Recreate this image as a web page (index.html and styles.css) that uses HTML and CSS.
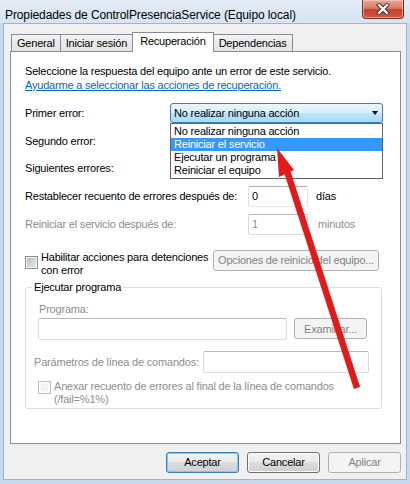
FILE: index.html
```html
<!DOCTYPE html>
<html lang="es">
<head>
    <meta charset="UTF-8">
    <title>Propiedades de ControlPresenciaService (Equipo local)</title>
    <link rel="stylesheet" href="styles.css">
</head>
<body>

<div class="window">
    <!-- barra de título -->
    <div class="titlebar">
        <span class="title">Propiedades de ControlPresenciaService (Equipo local)</span>
        <button class="close-btn" title="Cerrar">
            <svg width="14" height="12" viewBox="0 0 14 12">
                <path d="M3 2 L11 10 M11 2 L3 10" stroke="#3a3a3a" stroke-width="4.2" stroke-linecap="square"/>
                <path d="M3 2 L11 10 M11 2 L3 10" stroke="#fff" stroke-width="2.2" stroke-linecap="square"/>
            </svg>
        </button>
    </div>

    <div class="client">
        <!-- pestañas -->
        <div class="tabs">
            <div class="tab">General</div>
            <div class="tab">Iniciar sesión</div>
            <div class="tab active">Recuperación</div>
            <div class="tab">Dependencias</div>
        </div>

        <div class="panel">
            <p class="intro">Seleccione la respuesta del equipo ante un error de este servicio.</p>
            <a class="help-link" href="#">Ayudarme a seleccionar las acciones de recuperación.</a>

            <div class="field-row first">
                <span class="field-label">Primer error:</span>
                <div class="combo focused">
                    <span>No realizar ninguna acción</span>
                    <span class="combo-arrow"></span>
                    <ul class="dropdown">
                        <li>No realizar ninguna acción</li>
                        <li class="selected">Reiniciar el servicio</li>
                        <li>Ejecutar un programa</li>
                        <li>Reiniciar el equipo</li>
                    </ul>
                </div>
            </div>
            <!-- estos dos quedan tapados por la lista desplegada -->
            <div class="field-row second">
                <span class="field-label">Segundo error:</span>
                <div class="combo"><span class="combo-arrow"></span></div>
            </div>
            <div class="field-row third">
                <span class="field-label">Siguientes errores:</span>
                <div class="combo"><span class="combo-arrow"></span></div>
            </div>

            <div class="field-row reset-row">
                <span class="field-label wide">Restablecer recuento de errores después de:</span>
                <input class="textbox small" type="text" value="0">
                <span class="unit">días</span>
            </div>
            <div class="field-row restart-row disabled">
                <span class="field-label wide">Reiniciar el servicio después de:</span>
                <input class="textbox small" type="text" value="1" disabled>
                <span class="unit minutes">minutos</span>
            </div>

            <div class="check-row">
                <span class="checkbox"></span>
                <span class="check-label">Habilitar acciones para detenciones<br>con error</span>
                <button class="btn options-btn" disabled>Opciones de reinicio del equipo...</button>
            </div>

            <!-- grupo ejecutar programa -->
            <div class="groupbox">
                <span class="legend">Ejecutar programa</span>
                <div class="program-label disabled">Programa:</div>
                <div class="program-row">
                    <input class="textbox program-input" type="text" disabled>
                    <button class="btn browse-btn" disabled>Examinar...</button>
                </div>
                <div class="params-row">
                    <span class="params-label disabled">Parámetros de línea de comandos:</span>
                    <input class="textbox params-input" type="text" disabled>
                </div>
                <div class="append-row disabled">
                    <span class="checkbox off"></span>
                    <span class="check-label">Anexar recuento de errores al final de la línea de comandos<br>(/fail=%1%)</span>
                </div>
            </div>
        </div>

        <!-- botones -->
        <div class="dialog-buttons">
            <button class="btn default">Aceptar</button>
            <button class="btn">Cancelar</button>
            <button class="btn" disabled>Aplicar</button>
        </div>
    </div>

    <!-- flecha roja dibujada encima -->
    <svg class="annotation" width="410" height="484" viewBox="0 0 410 484">
        <line x1="287" y1="171" x2="357" y2="388" stroke="#e11b1b" stroke-width="6.5"/>
        <polygon points="277,148 279,177 294,170" fill="#e11b1b"/>
    </svg>
</div>

</body>
</html>
```

FILE: styles.css
```css
body {
    margin: 0;
    font-family: "Liberation Sans", Arial, sans-serif;
    font-size: 11px;
    letter-spacing: -0.2px;
    color: #000;
}
.window {
    position: relative;
    width: 410px;
    height: 484px;
    background: #c8d9ed;
    display: flex;
    flex-direction: column;
}
.titlebar {
    height: 23px;
    display: flex;
    align-items: flex-start;
    padding-left: 5px;
    background: linear-gradient(#e4ecf7, #d6e3f2);
}
.title {
    margin-top: 8px;
    font-size: 12px;
    line-height: 14px;
    letter-spacing: -0.1px;
    white-space: nowrap;
}
.close-btn {
    margin-left: auto;
    margin-right: 6px;
    width: 42px;
    height: 19px;
    padding: 0;
    border: 1px solid #7b2d22;
    border-top: none;
    border-radius: 0 0 4px 4px;
    background: linear-gradient(#e9a698 0%, #d97a67 45%, #c7412c 55%, #cf5a3f 100%);
    box-shadow: inset 0 0 0 1px rgba(255, 220, 210, 0.5);
    display: flex;
    align-items: center;
    justify-content: center;
}
.client {
    height: 455px;
    margin: 0 3px 4px 3px;
    border: 1px solid #9fb3ce;
    background: #f0f0f0;
    padding: 8px 5px 0 6px;
    box-sizing: content-box;
    width: 391px;
}
.tabs {
    display: flex;
    align-items: flex-end;
    height: 19px;
    margin-left: 1px;
}
.tab {
    height: 17px;
    box-sizing: border-box;
    padding: 0 5px;
    border: 1px solid #898c95;
    border-bottom: none;
    border-right: none;
    background: linear-gradient(#f3f3f3, #e3e3e3);
    line-height: 16px;
    white-space: nowrap;
}
.tab:last-child {
    border-right: 1px solid #898c95;
}
.tab.active {
    position: relative;
    z-index: 1;
    height: 20px;
    margin-bottom: -1px;
    padding: 0 7px;
    background: #fff;
    border-right: 1px solid #898c95;
    line-height: 17px;
}
.tab.active + .tab {
    border-left: none;
}
.panel {
    height: 393px;
    box-sizing: border-box;
    border: 1px solid #898c95;
    background: #fff;
    padding: 12px 0 0 14px;
}
.intro {
    margin: 0;
    line-height: 14px;
    white-space: nowrap;
}
.help-link {
    display: block;
    line-height: 14px;
    color: #0066cc;
    text-decoration: underline;
    white-space: nowrap;
}
.field-row {
    display: flex;
    align-items: center;
    height: 20px;
    white-space: nowrap;
}
.field-row.first { margin-top: 11px; }
.field-row.second { margin-top: 8px; }
.field-row.third { margin-top: 7px; }
.field-row.reset-row { margin-top: 8px; height: 21px; }
.field-row.restart-row { margin-top: 7px; height: 21px; }
.field-label {
    width: 145px;
    flex: 0 0 145px;
}
.field-label.wide {
    width: 223px;
    flex: 0 0 223px;
}
.disabled, .disabled .field-label, .disabled .unit {
    color: #8d8d8d;
}
.combo {
    position: relative;
    width: 213px;
    height: 20px;
    box-sizing: border-box;
    border: 1px solid #707070;
    border-radius: 3px;
    background: linear-gradient(#f2f2f2 0%, #ebebeb 49%, #dddddd 50%, #cfcfcf 100%);
    padding-left: 3px;
    display: flex;
    align-items: center;
}
.combo.focused {
    z-index: 2;
    border-color: #3c7fb1;
    background: linear-gradient(#eaf6fd 0%, #d9f0fc 49%, #bee6fd 50%, #a7d9f5 100%);
}
.combo-arrow {
    position: absolute;
    right: 4px;
    top: 7px;
    width: 0;
    height: 0;
    border-left: 3.5px solid transparent;
    border-right: 3.5px solid transparent;
    border-top: 4px solid #000;
}
.dropdown {
    position: absolute;
    left: -1px;
    top: 19px;
    width: 213px;
    box-sizing: border-box;
    margin: 0;
    padding: 1px 0;
    list-style: none;
    border: 1px solid #646464;
    background: #fff;
}
.dropdown li {
    height: 13px;
    line-height: 13px;
    padding-left: 3px;
}
.dropdown li.selected {
    background: #3399ff;
    color: #fff;
}
.textbox {
    height: 21px;
    box-sizing: border-box;
    margin: 0;
    padding: 0 3px;
    border: 1px solid;
    border-color: #abadb3 #e2e3ea #e3e9ef #dbdfe6;
    border-radius: 2px;
    background: #fff;
    font: inherit;
    letter-spacing: inherit;
    color: #000;
    outline: none;
}
.textbox:disabled {
    border-color: #b8b8b8 #d9d9d9 #dedede #d9d9d9;
    background: #fff;
    color: #8d8d8d;
}
.textbox.small {
    width: 60px;
}
.unit {
    margin-left: 8px;
}
.unit.minutes {
    margin-left: 10px;
}
.check-row {
    display: flex;
    align-items: flex-start;
    margin-top: 15px;
    white-space: nowrap;
}
.checkbox {
    flex: 0 0 13px;
    width: 13px;
    height: 13px;
    box-sizing: border-box;
    margin-top: 6px;
    border: 1px solid #8e8f8f;
    background: linear-gradient(135deg, #b4b8be, #eeeeef);
    box-shadow: inset 0 0 0 1px #f4f4f4;
}
.checkbox.off {
    margin-top: 1px;
    border-color: #c0c0c0;
    background: #f2f2f2;
    box-shadow: inset 0 0 0 2px #fafafa;
}
.check-label {
    margin-left: 3px;
    margin-top: 1px;
    line-height: 13px;
}
.check-row .check-label {
    flex: 0 0 168px;
}
.btn {
    width: 73px;
    height: 21px;
    box-sizing: border-box;
    padding: 0;
    border: 1px solid #707070;
    border-radius: 3px;
    background: linear-gradient(#f2f2f2 0%, #ebebeb 49%, #dddddd 50%, #cfcfcf 100%);
    box-shadow: inset 0 0 0 1px #fcfcfc;
    font: inherit;
    letter-spacing: inherit;
    color: #000;
}
.btn.default {
    border-color: #3c7fb1;
    box-shadow: inset 0 0 0 1px #6fcff7;
}
.btn:disabled {
    border-color: #adb2b5;
    background: #f4f4f4;
    box-shadow: none;
    color: #838383;
}
.options-btn {
    width: 166px;
    margin-left: 4px;
}
.groupbox {
    position: relative;
    margin-top: 10px;
    width: 357px;
    height: 122px;
    box-sizing: border-box;
    border: 1px solid #d5dfe5;
    border-radius: 3px;
    padding-top: 14px;
    white-space: nowrap;
}
.legend {
    position: absolute;
    top: -8px;
    left: 6px;
    padding: 0 2px;
    line-height: 14px;
    background: #fff;
}
.program-label {
    margin-left: 13px;
    line-height: 14px;
}
.program-row {
    display: flex;
    align-items: center;
    margin-top: 2px;
    margin-left: 12px;
    height: 22px;
}
.program-input {
    width: 249px;
    height: 22px;
}
.browse-btn {
    margin-left: 7px;
}
.params-row {
    display: flex;
    align-items: center;
    margin-top: 11px;
    margin-left: 8px;
    height: 22px;
}
.params-label {
    flex: 0 0 169px;
}
.params-input {
    width: 166px;
    height: 22px;
}
.append-row {
    display: flex;
    align-items: flex-start;
    margin-top: 7px;
    margin-left: 12px;
}
.append-row .check-label {
    margin-top: 0;
}
.dialog-buttons {
    display: flex;
    justify-content: flex-end;
    gap: 8px;
    margin-top: 8px;
}
.annotation {
    position: absolute;
    left: 0;
    top: 0;
    pointer-events: none;
    z-index: 5;
}
```
